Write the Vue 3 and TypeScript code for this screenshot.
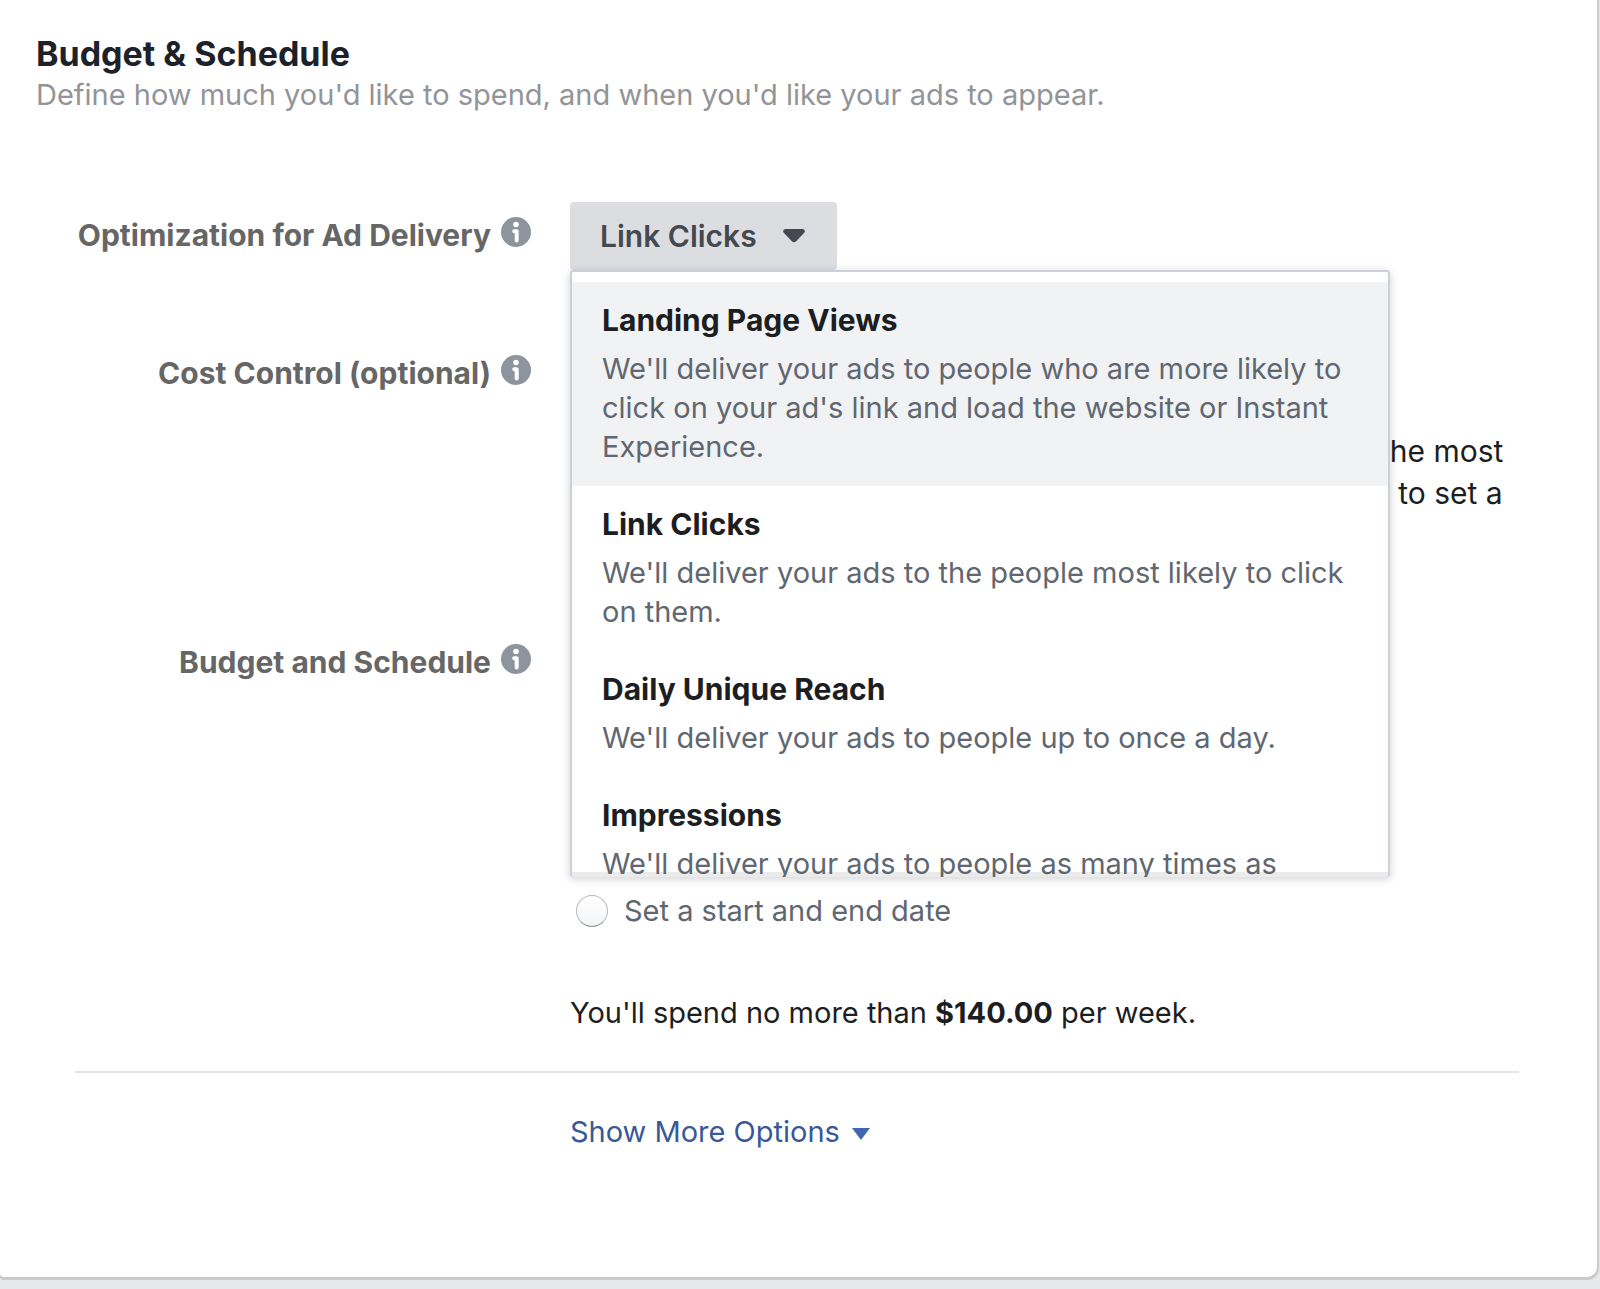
<script setup lang="ts">
import { ref } from 'vue'

interface DeliveryOption {
  title: string
  description: string
}

const options: DeliveryOption[] = [
  {
    title: 'Landing Page Views',
    description:
      "We'll deliver your ads to people who are more likely to click on your ad's link and load the website or Instant Experience.",
  },
  {
    title: 'Link Clicks',
    description: "We'll deliver your ads to the people most likely to click on them.",
  },
  {
    title: 'Daily Unique Reach',
    description: "We'll deliver your ads to people up to once a day.",
  },
  {
    title: 'Impressions',
    description: "We'll deliver your ads to people as many times as",
  },
]

const selected = ref('Link Clicks')
const highlighted = ref('Landing Page Views')
const open = ref(true)
const schedule = ref('')

function choose(option: DeliveryOption) {
  selected.value = option.title
  open.value = false
}
</script>

<template>
  <main class="card">
    <header class="heading">
      <h1>Budget &amp; Schedule</h1>
      <p>Define how much you'd like to spend, and when you'd like your ads to appear.</p>
    </header>

    <section class="row row-delivery">
      <div class="label">
        <span id="delivery-label">Optimization for Ad Delivery</span>
        <svg class="info" viewBox="0 0 30 30" aria-hidden="true">
          <circle cx="15" cy="15" r="15" />
          <circle class="mark" cx="15" cy="7.500" r="2.800" />
          <path class="stroke" d="M13.200 14.200h2.500v9.300" />
        </svg>
      </div>
      <div class="control select">
        <button
          class="trigger"
          type="button"
          aria-haspopup="listbox"
          :aria-expanded="open"
          aria-labelledby="delivery-label"
          @click="open = !open"
        >
          {{ selected }}
          <svg class="caret" viewBox="0 0 22 14" aria-hidden="true">
            <path d="M2.500 0h17c2.200 0 3 2.400 1.500 4l-7.800 8.300c-1.300 1.300-3.100 1.300-4.400 0L1 4C-.5 2.400.3 0 2.500 0z" />
          </svg>
        </button>
        <ul v-if="open" class="menu" role="listbox" aria-labelledby="delivery-label">
          <li
            v-for="option in options"
            :key="option.title"
            class="option"
            :class="{ active: option.title === highlighted }"
            role="option"
            :aria-selected="option.title === selected"
            @mouseenter="highlighted = option.title"
            @click="choose(option)"
          >
            <strong>{{ option.title }}</strong>
            <p>{{ option.description }}</p>
          </li>
        </ul>
      </div>
    </section>

    <section class="row row-cost">
      <div class="label">
        <span>Cost Control (optional)</span>
        <svg class="info" viewBox="0 0 30 30" aria-hidden="true">
          <circle cx="15" cy="15" r="15" />
          <circle class="mark" cx="15" cy="7.500" r="2.800" />
          <path class="stroke" d="M13.200 14.200h2.500v9.300" />
        </svg>
      </div>
      <p class="control hint">the most<br />t to set a</p>
    </section>

    <section class="row row-budget">
      <div class="label">
        <span>Budget and Schedule</span>
        <svg class="info" viewBox="0 0 30 30" aria-hidden="true">
          <circle cx="15" cy="15" r="15" />
          <circle class="mark" cx="15" cy="7.500" r="2.800" />
          <path class="stroke" d="M13.200 14.200h2.500v9.300" />
        </svg>
      </div>
      <div class="control schedule">
        <label class="radio">
          <input v-model="schedule" type="radio" name="schedule" value="range" />
          <span>Set a start and end date</span>
        </label>
        <p class="spend">You'll spend no more than <strong>$140.00</strong> per week.</p>
      </div>
    </section>

    <footer class="more">
      <a href="#more">
        Show More Options
        <svg viewBox="0 0 18 12" aria-hidden="true"><path d="M0 0h18L9 12z" /></svg>
      </a>
    </footer>
  </main>
</template>

<style>
body {
  margin: 0;
  background: #e7e8ea;
}
</style>

<style scoped>
.card {
  box-sizing: border-box;
  margin: 0 3px 11px 0;
  padding: 33px 0 124px;
  background: #fff;
  border-radius: 0 0 10px 4px;
  box-shadow: 0 1px 1px 2px #c8c9cc;
  color: #1c1e21;
  font-family: Inter, 'Liberation Sans', sans-serif;
  font-size: 29px;
  line-height: 42px;
}

h1,
p,
ul {
  margin: 0;
  padding: 0;
}

.heading {
  padding-left: 36px;
}

.heading h1 {
  font-size: 34px;
  font-weight: 700;
  line-height: 41px;
  color: #1d2129;
}

.heading p {
  color: #929497;
}

.row {
  display: grid;
  grid-template-columns: 531px 1fr;
  column-gap: 39px;
  align-items: start;
}

.row-delivery {
  margin-top: 86px;
  min-height: 138px;
}

.row-cost {
  min-height: 289px;
}

.label {
  display: flex;
  justify-content: flex-end;
  gap: 10px;
  padding-top: 12px;
  font-size: 30px;
  font-weight: 700;
  color: #666;
  white-space: nowrap;
}

.info {
  width: 30px;
  height: 30px;
  margin-top: 3px;
  fill: #8d949e;
}

.info .mark {
  fill: #fff;
}

.info .stroke {
  fill: none;
  stroke: #fff;
  stroke-width: 4;
  stroke-linecap: round;
  stroke-linejoin: round;
}

.select {
  position: relative;
}

.trigger {
  display: flex;
  align-items: center;
  gap: 26px;
  height: 68px;
  padding: 0 32px 0 30px;
  border: 0;
  border-radius: 4px;
  background: #dcdde1;
  color: #444950;
  font: inherit;
  font-size: 30px;
  font-weight: 600;
}

.caret {
  width: 22px;
  height: 14px;
  fill: #444950;
}

.menu {
  position: absolute;
  z-index: 1;
  top: 68px;
  left: 0;
  box-sizing: border-box;
  width: 820px;
  height: 607px;
  padding-top: 10px;
  overflow: hidden;
  list-style: none;
  border: 2px solid #ccd0d8;
  border-bottom: 0;
  border-radius: 3px;
  background: linear-gradient(#ebebeb, #ebebeb) bottom / 100% 5px no-repeat #fff;
  box-shadow: 0 2px 10px rgba(0, 0, 0, 0.18);
}

.option {
  padding: 19px 28px 20px 30px;
  line-height: 39px;
  cursor: pointer;
}

.option.active {
  background: #f1f2f4;
}

.option strong {
  display: block;
  margin-bottom: 9px;
  font-size: 30px;
}

.option p {
  color: #606770;
}

.hint {
  margin: 90px 0 0 810px;
  font-size: 30px;
  white-space: nowrap;
}

.schedule {
  padding-top: 261px;
}

.radio {
  display: flex;
  align-items: center;
  gap: 16px;
  padding-left: 6px;
  color: #606770;
}

.radio input {
  appearance: none;
  width: 32px;
  height: 32px;
  margin: 0;
  border: 1px solid #b8babd;
  border-bottom-color: #8f9194;
  border-radius: 50%;
  background: linear-gradient(#fff, #f3f4f5);
}

.spend {
  margin-top: 60px;
}

.more {
  margin: 37px 78px 0 75px;
  padding: 38px 0 0 495px;
  border-top: 2px solid #e5e5e5;
}

.more a {
  display: inline-flex;
  align-items: center;
  gap: 12px;
  color: #385898;
  text-decoration: none;
}

.more svg {
  width: 18px;
  height: 12px;
  margin-top: 4px;
  fill: #4267b2;
}
</style>
